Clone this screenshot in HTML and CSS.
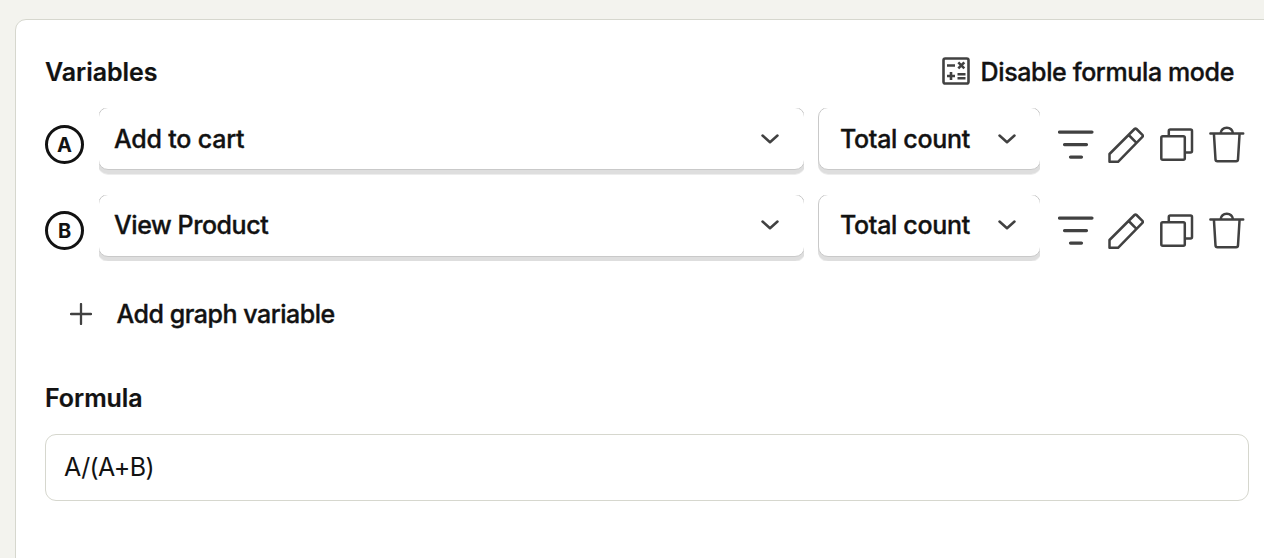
FILE: index.html
```html
<!DOCTYPE html>
<html lang="en">
<head>
<meta charset="utf-8">
<title>Variables</title>
<link rel="stylesheet" href="styles.css">
</head>
<body>
<svg class="defs" width="0" height="0" aria-hidden="true">
  <symbol id="chevron" viewBox="0 0 18 10"><path d="M1.500 1.500 9 8.300l7.500-6.800"/></symbol>
  <symbol id="filter" viewBox="0 0 36 38"><path stroke-width="3.200" d="M1.500 6.100H34M6.500 18.600h22M12.500 31.100h11"/></symbol>
  <symbol id="pencil" viewBox="0 0 36 38"><path d="M1.500 35.800V28L26.500 3q1-1 2 0l5.900 5.900q1 1 0 2L10 35.800ZM20.700 9l7.800 7.800"/></symbol>
  <symbol id="copy" viewBox="0 0 36 38"><rect x="2.300" y="10.300" width="23.500" height="23.500" rx="1.500"/><path d="M9.800 9.800V5q0-1.500 1.500-1.500H31.500q1.500 0 1.500 1.500v20q0 1.500-1.500 1.500h-5"/></symbol>
  <symbol id="trash" viewBox="0 0 36 38"><path d="M1.400 7.400H34.200M4.900 7.400l1.600 26q.1 1.800 1.900 1.800h18.700q1.800 0 1.900-1.800l1.600-26M11.500 7.400q1-5.700 6.300-5.700t6.300 5.700"/></symbol>
</svg>
<main class="card">
  <header class="head">
    <h2 class="title">Variables</h2>
    <button class="mode">
      <svg class="calc" viewBox="0 0 28 28"><rect x="1.500" y="1.500" width="25" height="25" rx="1.800"/><path d="M5 8.500h8M5 19h8M9 15v8M15.500 17.300h8M15.500 21.300h8M16.300 5.300l6 6M22.300 5.300l-6 6"/></svg>
      <span class="t-mode">Disable formula mode</span>
    </button>
  </header>
  <section class="rows">
    <div class="row">
      <span class="badge">A</span>
      <div class="clip event"><button class="select"><span class="t-cart">Add to cart</span><svg class="chev"><use href="#chevron"/></svg></button></div>
      <div class="clip count"><button class="select"><span class="t-count">Total count</span><svg class="chev"><use href="#chevron"/></svg></button></div>
      <div class="tools"><svg><use href="#filter"/></svg><svg><use href="#pencil"/></svg><svg><use href="#copy"/></svg><svg><use href="#trash"/></svg></div>
    </div>
    <div class="row second">
      <span class="badge">B</span>
      <div class="clip event"><button class="select"><span class="t-view">View Product</span><svg class="chev"><use href="#chevron"/></svg></button></div>
      <div class="clip count"><button class="select"><span class="t-count">Total count</span><svg class="chev"><use href="#chevron"/></svg></button></div>
      <div class="tools"><svg><use href="#filter"/></svg><svg><use href="#pencil"/></svg><svg><use href="#copy"/></svg><svg><use href="#trash"/></svg></div>
    </div>
  </section>
  <button class="add"><svg class="plus" viewBox="0 0 22 22"><path d="M1 11h20M11 1v20"/></svg><span class="t-add">Add graph variable</span></button>
  <h2 class="title formula-title">Formula</h2>
  <div class="formula"><span class="t-expr">A/(A+B)</span></div>
</main>
</body>
</html>
```
FILE: styles.css
```css
* { box-sizing: border-box; }
body {
  margin: 0;
  height: 558px;
  overflow: hidden;
  padding: 19px 0 0 15px;
  background: #f3f3ee;
  color: #121212;
  font: 500 25px/32px Inter, sans-serif;
}
.defs { display: block; height: 0; }
button {
  display: flex;
  align-items: center;
  padding: 0;
  border: 0;
  background: none;
  color: inherit;
  font: inherit;
  -webkit-text-stroke: 0.350px #121212;
}
span, h2 { white-space: nowrap; }
svg {
  flex: none;
  fill: none;
  stroke: #414141;
  stroke-width: 2.5;
  stroke-linecap: round;
  stroke-linejoin: round;
}
.card {
  width: 1270px;
  height: 560px;
  padding: 36px 0 0 29px;
  border: 1px solid #d6d7ce;
  border-radius: 11px;
  background: #fff;
}
.head {
  display: flex;
  justify-content: space-between;
  width: 1189px;
  height: 32px;
}
.title {
  margin: 0;
  font-size: 25px;
  font-weight: 600;
  line-height: 32px;
  letter-spacing: -0.050px;
  -webkit-text-stroke: 0.200px #121212;
}
.t-mode { letter-spacing: -0.370px; }
.t-cart { letter-spacing: -0.200px; }
.t-count { letter-spacing: -0.320px; }
.t-view { letter-spacing: -0.430px; }
.t-add { letter-spacing: -0.480px; }
.t-expr { margin-top: -1px; letter-spacing: -0.600px; }
.mode { gap: 11px; height: 32px; }
.calc { width: 28px; height: 28px; margin-bottom: 2px; stroke-width: 2.600; stroke-linecap: butt; }
.rows { display: grid; gap: 21px; margin-top: 20px; }
.row { display: flex; height: 66px; }
.badge {
  display: flex;
  align-items: center;
  justify-content: center;
  width: 39px;
  height: 39px;
  margin: 17px 15px 0 0;
  border: 3px solid #121212;
  border-radius: 50%;
  font-size: 20px;
  font-weight: 700;
}
.second .badge { margin-top: 16px; }
.clip { overflow: hidden; height: 67px; }
.second .clip { height: 66px; }
.event { width: 705px; margin-right: 14px; }
.count { width: 222px; margin-right: 18px; }
.select {
  justify-content: space-between;
  width: calc(100% + 2px);
  height: 63px;
  margin: -1px 0 0 -1px;
  padding: 1px 25px 0 15px;
  border: 1px solid #c9c9c9;
  border-radius: 10px;
  background: #fff;
  box-shadow: 0 4px 0 #dedede, 0 5px 0 #ededed;
}
.second .select { padding-top: 0; padding-bottom: 1px; }
.count .select { width: 223px; margin-left: 0; padding-right: 24.500px; padding-left: 21px; }
.chev { width: 18px; height: 10px; }
.tools { display: flex; gap: 14.400px; margin-top: 18px; }
.second .tools { margin-top: 17px; }
.tools svg { width: 36px; height: 38px; }
.add { gap: 25px; height: 32px; margin: 37px 0 0 24.500px; }
.plus { width: 22px; height: 22px; stroke-width: 2.300; }
.formula-title { margin-top: 52px; }
.formula {
  display: flex;
  align-items: center;
  width: 1204px;
  height: 67px;
  margin-top: 20px;
  padding-left: 18px;
  border: 1px solid #d6d7ce;
  border-radius: 11px;
  font-weight: 400;
}
```
